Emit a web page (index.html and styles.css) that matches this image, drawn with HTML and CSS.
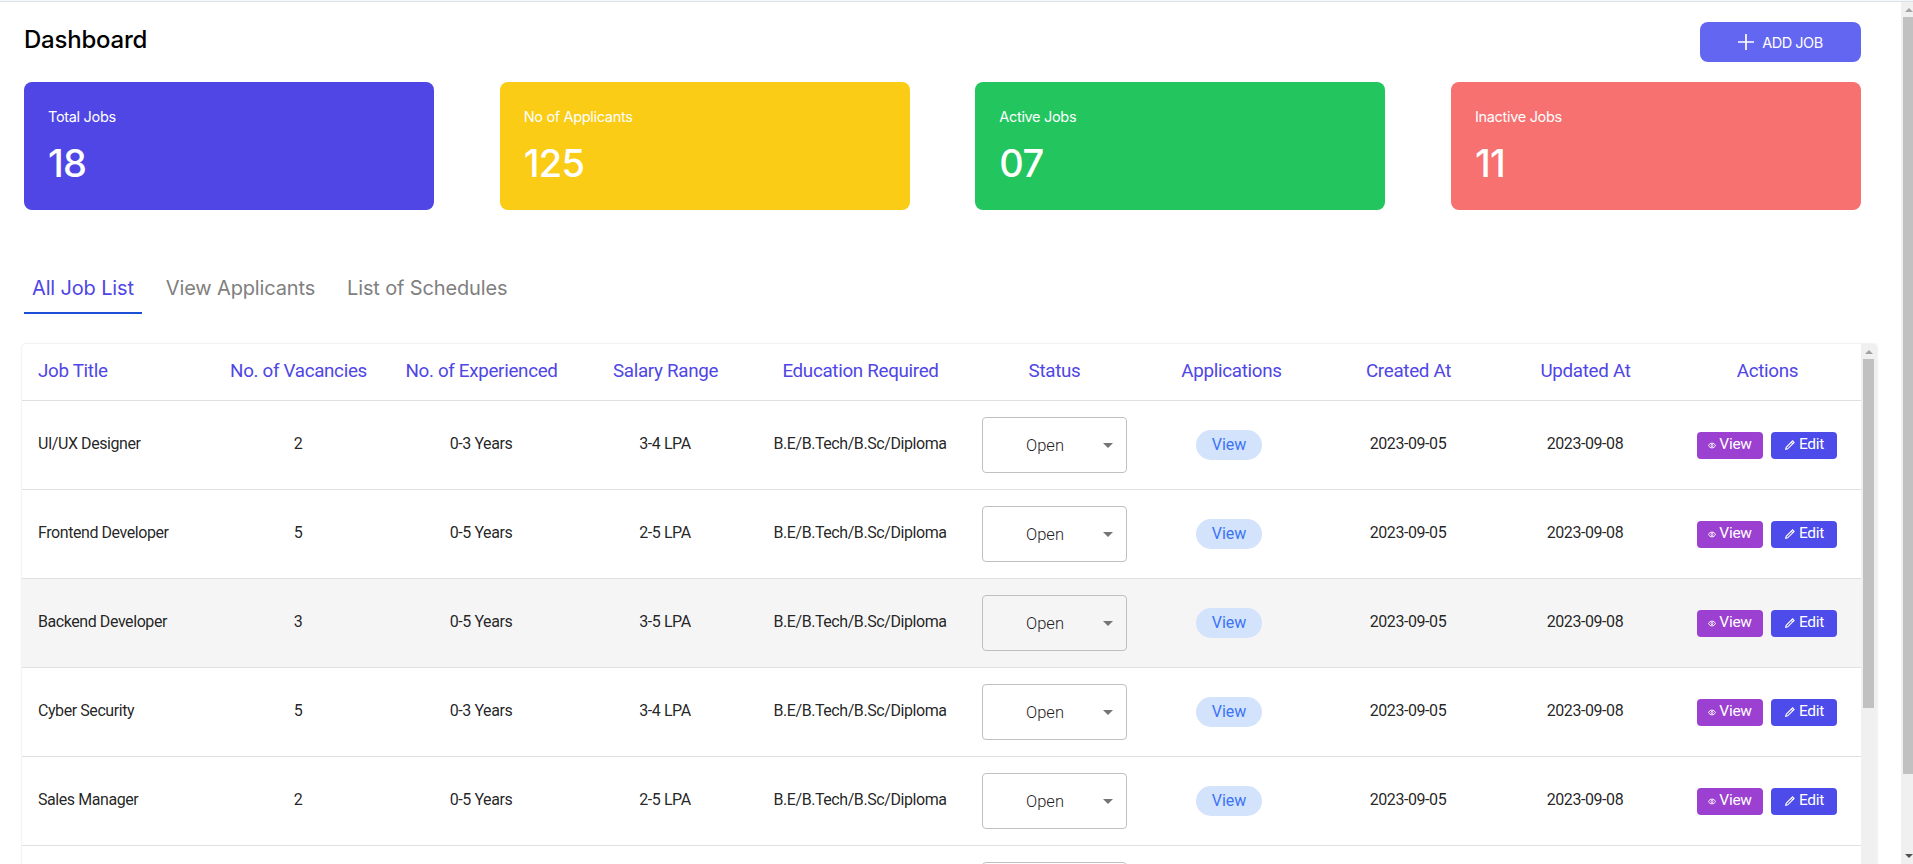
FILE: index.html
```html
<!DOCTYPE html>
<html lang="en">
<head>
<meta charset="utf-8">
<title>Dashboard</title>
<link rel="stylesheet" href="styles.css">
</head>
<body>
<svg class="sprite" aria-hidden="true">
  <symbol id="plus" viewBox="0 0 16 16"><path d="M8 0v16M0 8h16" fill="none" stroke="currentColor" stroke-width="1.7"/></symbol>
  <symbol id="eye" viewBox="0 0 9 7"><path d="M.6 3.500C2.200-.1 6.800-.1 8.400 3.500 6.800 7.100 2.200 7.100.6 3.500Z" fill="none" stroke="currentColor" stroke-width="1.100"/><circle cx="4.500" cy="3.500" r="1.200" fill="none" stroke="currentColor" stroke-width="1"/></symbol>
  <symbol id="pencil" viewBox="0 0 10 10"><path d="M.7 9.300 1.200 7.300 7.600.9 9.100 2.400 2.700 8.800ZM6.200 2.200 7.800 3.800" fill="none" stroke="currentColor" stroke-width="1.100"/></symbol>
</svg>
<div class="window">
  <main class="page">
    <header class="topbar">
      <h1 class="title">Dashboard</h1>
      <button class="add"><svg class="add-icon"><use href="#plus"/></svg>ADD JOB</button>
    </header>
    <section class="cards">
      <div class="card indigo"><p class="label">Total Jobs</p><p class="count">18</p></div>
      <div class="card yellow"><p class="label">No of Applicants</p><p class="count">125</p></div>
      <div class="card green"><p class="label">Active Jobs</p><p class="count">07</p></div>
      <div class="card red"><p class="label">Inactive Jobs</p><p class="count">11</p></div>
    </section>
    <nav class="tabs">
      <a class="tab active">All Job List</a>
      <a class="tab">View Applicants</a>
      <a class="tab">List of Schedules</a>
    </nav>
    <section class="paper">
      <table class="jobs">
        <colgroup><col class="c-title"><col class="c-vac"><col class="c-exp"><col class="c-sal"><col class="c-edu"><col class="c-stat"><col class="c-app"><col class="c-cre"><col class="c-upd"><col class="c-act"></colgroup>
        <thead>
          <tr><th>Job Title</th><th>No. of Vacancies</th><th>No. of Experienced</th><th>Salary Range</th><th>Education Required</th><th>Status</th><th>Applications</th><th>Created At</th><th>Updated At</th><th>Actions</th></tr>
        </thead>
        <tbody>
          <tr><td>UI/UX Designer</td><td>2</td><td>0-3 Years</td><td>3-4 LPA</td><td>B.E/B.Tech/B.Sc/Diploma</td><td class="ctl"><div class="select"><span class="value">Open</span><i class="caret"></i></div></td><td class="ctl app"><span class="pill">View</span></td><td>2023-09-05</td><td>2023-09-08</td><td class="ctl"><div class="actions"><span class="btn view"><svg class="eye"><use href="#eye"/></svg>View</span><span class="btn edit"><svg class="pencil"><use href="#pencil"/></svg>Edit</span></div></td></tr>
          <tr><td>Frontend Developer</td><td>5</td><td>0-5 Years</td><td>2-5 LPA</td><td>B.E/B.Tech/B.Sc/Diploma</td><td class="ctl"><div class="select"><span class="value">Open</span><i class="caret"></i></div></td><td class="ctl app"><span class="pill">View</span></td><td>2023-09-05</td><td>2023-09-08</td><td class="ctl"><div class="actions"><span class="btn view"><svg class="eye"><use href="#eye"/></svg>View</span><span class="btn edit"><svg class="pencil"><use href="#pencil"/></svg>Edit</span></div></td></tr>
          <tr class="hovered"><td>Backend Developer</td><td>3</td><td>0-5 Years</td><td>3-5 LPA</td><td>B.E/B.Tech/B.Sc/Diploma</td><td class="ctl"><div class="select"><span class="value">Open</span><i class="caret"></i></div></td><td class="ctl app"><span class="pill">View</span></td><td>2023-09-05</td><td>2023-09-08</td><td class="ctl"><div class="actions"><span class="btn view"><svg class="eye"><use href="#eye"/></svg>View</span><span class="btn edit"><svg class="pencil"><use href="#pencil"/></svg>Edit</span></div></td></tr>
          <tr><td>Cyber Security</td><td>5</td><td>0-3 Years</td><td>3-4 LPA</td><td>B.E/B.Tech/B.Sc/Diploma</td><td class="ctl"><div class="select"><span class="value">Open</span><i class="caret"></i></div></td><td class="ctl app"><span class="pill">View</span></td><td>2023-09-05</td><td>2023-09-08</td><td class="ctl"><div class="actions"><span class="btn view"><svg class="eye"><use href="#eye"/></svg>View</span><span class="btn edit"><svg class="pencil"><use href="#pencil"/></svg>Edit</span></div></td></tr>
          <tr><td>Sales Manager</td><td>2</td><td>0-5 Years</td><td>2-5 LPA</td><td>B.E/B.Tech/B.Sc/Diploma</td><td class="ctl"><div class="select"><span class="value">Open</span><i class="caret"></i></div></td><td class="ctl app"><span class="pill">View</span></td><td>2023-09-05</td><td>2023-09-08</td><td class="ctl"><div class="actions"><span class="btn view"><svg class="eye"><use href="#eye"/></svg>View</span><span class="btn edit"><svg class="pencil"><use href="#pencil"/></svg>Edit</span></div></td></tr>
          <tr><td></td><td></td><td></td><td></td><td></td><td class="ctl"><div class="select"></div></td><td></td><td></td><td></td><td></td></tr>
        </tbody>
      </table>
      <div class="inner-bar"><i class="arrow-up"></i><div class="inner-thumb"></div></div>
    </section>
  </main>
  <div class="outer-bar"><i class="arrow-up"></i><div class="outer-thumb"></div><i class="arrow-down"></i></div>
</div>
</body>
</html>
```
FILE: styles.css
```css
* { box-sizing: border-box; }
html, body { height: 100%; }
body { margin: 0; overflow: hidden; background: #fff; border-top: 1px solid #f4f8fb; font-family: Inter, "Liberation Sans", sans-serif; }
h1, p { margin: 0; font-weight: 400; }
.sprite { position: absolute; width: 0; height: 0; }
.window { display: flex; height: 863px; border-top: 1px solid #dae3e9; overflow: hidden; }
.page { width: 1901px; height: 862px; padding: 20px 0 0 24px; overflow: hidden; }

.topbar { display: flex; justify-content: space-between; width: 1837px; height: 60px; }
.title { font-size: 24px; line-height: 32px; font-weight: 450; letter-spacing: -.22px; color: #000; padding-top: 2px; }
.add { display: flex; align-items: center; justify-content: center; gap: 8px; width: 161px; height: 40px; padding: 0; border: 0; border-radius: 8px; background: #6366f1; color: #fff; font: 14.500px Inter, sans-serif; letter-spacing: -.5px; }
.add-icon { width: 16px; height: 16px; }

.cards { display: flex; justify-content: space-between; width: 1837px; height: 128px; }
.card { width: 410px; padding: 24.500px 24px 0; border-radius: 8px; color: #fff; }
.indigo { background: #4f46e5; }
.yellow { background: #facc15; }
.green { background: #22c55e; }
.red { background: #f87171; }
.label { font-size: 14.500px; line-height: 20px; letter-spacing: -.32px; }
.count { font-size: 38px; line-height: 40px; font-weight: 450; letter-spacing: -.7px; margin-top: 16.500px; }

.tabs { display: flex; gap: 16px; height: 48px; margin-top: 56px; }
.tab { height: 48px; padding: 8px; font-size: 20px; line-height: 28px; letter-spacing: -.15px; color: #808080; border-bottom: 2px solid transparent; }
.tab.active { color: #4f46e5; border-color: #1d4ed8; }

.paper { display: flex; width: 1855px; height: 560px; margin: 30px 0 0 -2px; border-radius: 4px; overflow: hidden; box-shadow: 0 0 2px rgba(0,0,0,.18); font-family: Roboto, sans-serif; }
.jobs { width: 1839px; height: 591px; table-layout: fixed; border-collapse: separate; border-spacing: 0; }
.c-title { width: 187px; } .c-vac { width: 178px; } .c-exp { width: 188px; } .c-sal { width: 180px; }
.c-edu { width: 210px; } .c-stat { width: 178px; } .c-app { width: 176px; } .c-cre { width: 178px; }
.c-upd { width: 176px; } .c-act { width: 188px; }
.jobs th { height: 57px; padding: 0 0 3px 1px; font-size: 18.800px; letter-spacing: -.31px; font-weight: 400; color: #4f46e5; border-bottom: 1px solid #e0e0e0; white-space: nowrap; }
.jobs td { height: 89px; padding: 0 0 3px; font-size: 16px; letter-spacing: -.43px; color: rgba(0,0,0,.87); text-align: center; border-bottom: 1px solid #e0e0e0; white-space: nowrap; }
.jobs td.ctl { padding: 0; letter-spacing: 0; }
.jobs th:first-child, .jobs td:first-child { padding-left: 16px; text-align: left; }
.hovered { background: #f5f5f5; }

.select { display: flex; align-items: center; width: 145px; height: 56px; margin: 0 auto; padding: 0 14px; border: 1px solid #c0c0c0; border-radius: 4px; }
.value { flex: 1; padding-left: 8px; text-align: center; margin-right: 17px; font-size: 16.500px; font-weight: 300; color: #222; }
.caret { margin-right: -1px; border: 5px solid transparent; border-top-color: #757575; border-bottom: 0; }
.jobs td.app { padding-right: 4px; }
.pill { display: inline-block; width: 66px; height: 30px; border-radius: 15px; background: #d3e3fc; color: #3b73f6; font-size: 16px; line-height: 29px; }
.actions { display: flex; gap: 8px; padding: 0 24px; }
.btn { display: flex; align-items: center; justify-content: center; width: 66px; height: 27px; border-radius: 4px; color: #fff; font-size: 15.500px; letter-spacing: -.3px; line-height: 25px; padding-bottom: 1px; }
.view { gap: 3px; background: #9b40d0; }
.edit { gap: 4px; padding-left: 1px; background: #4d4be9; }
.eye { width: 8px; height: 7px; margin-top: 1px; }
.pencil { width: 10px; height: 10px; margin-top: 1px; }

.inner-bar { width: 16px; background: #f0f0f0; padding-top: 6px; }
.inner-thumb { width: 11px; height: 349px; margin: 5px 0 0 2px; background: #c1c1c1; }
.arrow-up { display: block; width: 0; margin-left: 4px; border: 4px solid transparent; border-top: 0; border-bottom-color: #a3a3a3; }
.outer-bar { display: flex; flex-direction: column; width: 12px; padding-top: 6px; background: #f0f0f0; overflow: hidden; }
.outer-thumb { width: 10px; height: 757px; margin: 5px 0 0 2px; background: #c1c1c1; flex: none; }
.outer-bar .arrow-up { flex: none; }
.arrow-down { width: 0; margin: 80px 0 0 4px; border: 4px solid transparent; border-bottom: 0; border-top-color: #505050; }
```
